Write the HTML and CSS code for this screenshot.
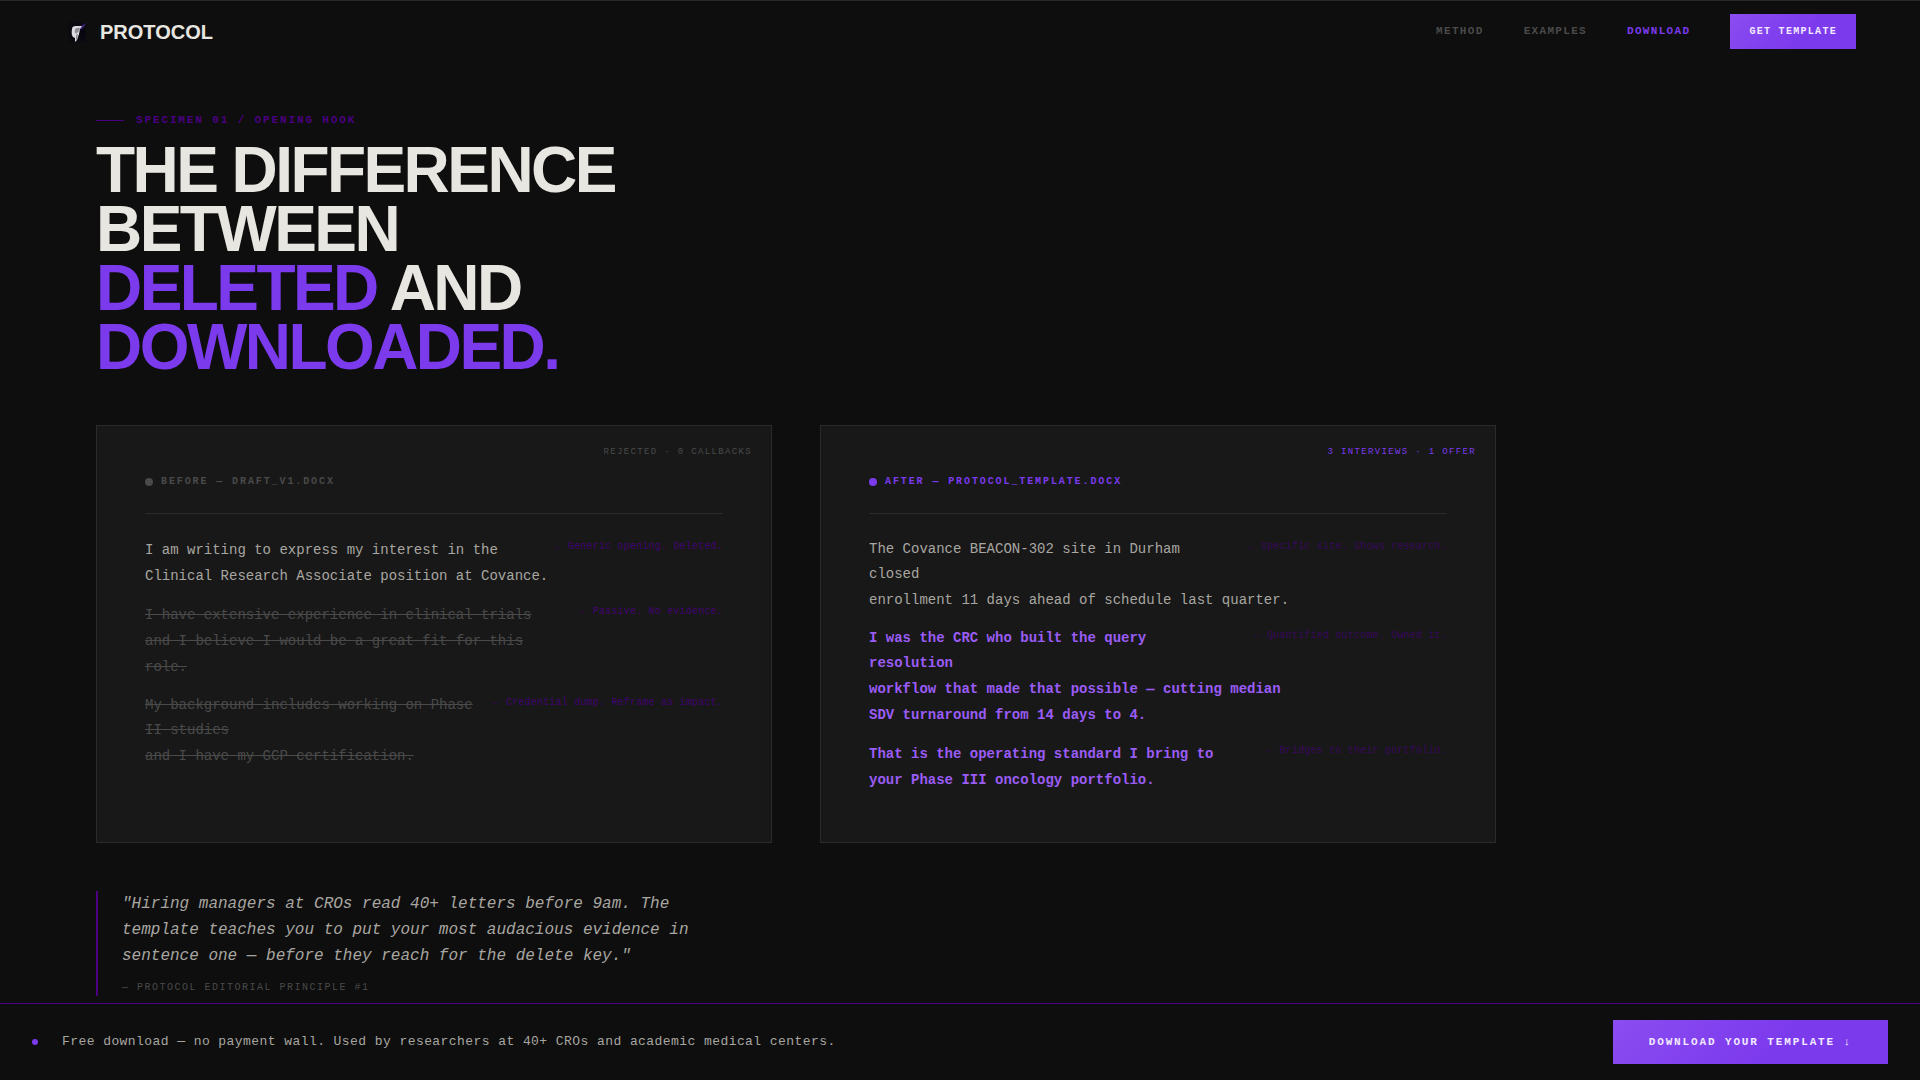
FILE: index.html
```html
<!DOCTYPE html>
<html lang="en">
<head>
<meta charset="utf-8">
<meta name="viewport" content="width=device-width, initial-scale=1">
<title>Protocol</title>
<link rel="stylesheet" href="styles.css">
</head>
<body>
<header class="nav">
  <a class="brand" href="#">
    <svg class="brand-mark" viewBox="0 0 28 28" aria-hidden="true">
      <rect x="4" y="4" width="18" height="20" fill="#0b0a10"/>
      <path d="M16 10 21 8 21 20 17 21Z" fill="#07050d"/>
      <path d="M15 9 22 5 20 9 17 12Z" fill="#3a2472"/>
      <path d="M8 11Q8 8 12 8L18 8 16 11 15 16 13 22 11 24 11 20 9 19Q7 16 8 11Z" fill="#dddce1"/>
      <path d="M11 11Q14 9 16 10L15 13 12 16Q10 14 11 11Z" fill="#8f8d96"/>
      <path d="M12 17 14 16 13 21 12 22Z" fill="#8f8d96"/>
    </svg>
    <span>PROTOCOL</span>
  </a>
  <nav class="nav-links">
    <a href="#method">METHOD</a>
    <a href="#examples">EXAMPLES</a>
    <a class="is-active" href="#download">DOWNLOAD</a>
    <button class="button button--small" type="button">GET TEMPLATE</button>
  </nav>
</header>

<main class="page">
  <p class="eyebrow">SPECIMEN 01 / OPENING HOOK</p>
  <h1 class="headline">THE DIFFERENCE<br>BETWEEN<br><em>DELETED</em> AND<br><em>DOWNLOADED.</em></h1>

  <div class="compare">
    <article class="card">
      <span class="card-status">REJECTED · 0 CALLBACKS</span>
      <h2 class="card-label">BEFORE — DRAFT_V1.DOCX</h2>
      <p class="para"><span class="note">← Generic opening. Deleted.</span><span class="line">I am writing to express my interest in the</span><span class="line">Clinical Research Associate position at Covance.</span></p>
      <p class="para para--struck"><span class="note">← Passive. No evidence.</span><span class="line">I have extensive experience in clinical trials</span><span class="line">and I believe I would be a great fit for this</span><span class="line">role.</span></p>
      <p class="para para--struck"><span class="note">← Credential dump. Reframe as impact.</span><span class="line line--wrap">My background includes working on Phase II studies</span><span class="line">and I have my GCP certification.</span></p>
    </article>
    <article class="card card--after">
      <span class="card-status">3 INTERVIEWS · 1 OFFER</span>
      <h2 class="card-label">AFTER — PROTOCOL_TEMPLATE.DOCX</h2>
      <p class="para"><span class="note">← Specific site. Shows research.</span><span class="line line--wrap">The Covance BEACON-302 site in Durham closed</span><span class="line">enrollment 11 days ahead of schedule last quarter.</span></p>
      <p class="para para--strong"><span class="note">← Quantified outcome. Owned it.</span><span class="line line--wrap">I was the CRC who built the query resolution</span><span class="line">workflow that made that possible — cutting median</span><span class="line">SDV turnaround from 14 days to 4.</span></p>
      <p class="para para--strong"><span class="note">← Bridges to their portfolio.</span><span class="line">That is the operating standard I bring to</span><span class="line">your Phase III oncology portfolio.</span></p>
    </article>
  </div>

  <blockquote class="quote">
    <p>"Hiring managers at CROs read 40+ letters before 9am. The template teaches you to put your most audacious evidence in sentence one — before they reach for the delete key."</p>
    <footer>— PROTOCOL EDITORIAL PRINCIPLE #1</footer>
  </blockquote>
</main>

<aside class="bar">
  <p class="bar-text">Free download — no payment wall. Used by researchers at 40+ CROs and academic medical centers.</p>
  <button class="button" type="button">DOWNLOAD YOUR TEMPLATE ↓</button>
</aside>
</body>
</html>
```
FILE: styles.css
```css
:root {
  --bg: #0e0e0e;
  --card: #181818;
  --rule: #2a2a2a;
  --paper: #e8e6e1;
  --text: #a8a6a1;
  --muted: #4a4a4a;
  --violet: #7c3aed;
  --violet-light: #9b5cf6;
  --indigo: #4b0082;
}

* { box-sizing: border-box; margin: 0; }

body {
  background: var(--bg);
  color: var(--text);
  font-family: "Liberation Mono", monospace;
  padding-bottom: 77px;
}

a { color: inherit; text-decoration: none; }

.nav {
  display: flex;
  align-items: center;
  justify-content: space-between;
  height: 62px;
  padding: 0 64px;
  border-top: 1px solid var(--rule);
}

.brand {
  display: flex;
  align-items: center;
  gap: 8px;
  color: var(--paper);
  font: bold 20px/24px "Liberation Sans", sans-serif;
}

.brand-mark { width: 28px; height: 28px; }

.nav-links {
  display: flex;
  align-items: center;
  gap: 40px;
  color: var(--muted);
  font-size: 11px;
  font-weight: bold;
  letter-spacing: 0.12em;
}

.nav-links a { padding-bottom: 2px; }

.is-active { color: var(--violet); }

.button {
  height: 44px;
  padding: 0 36px;
  border: 0;
  background: linear-gradient(135deg, #8b4cf0, var(--violet) 60%);
  color: #f3eaff;
  font: bold 11px/16px "Liberation Mono", monospace;
  letter-spacing: 0.17em;
  white-space: nowrap;
}

.button--small {
  height: 35px;
  padding: 0 19px;
  font-size: 10px;
  letter-spacing: 0.13em;
}

.page { padding: 50px 96px 0; }

.eyebrow {
  display: flex;
  align-items: center;
  gap: 12px;
  margin-bottom: 13px;
  color: var(--indigo);
  font-size: 11px;
  font-weight: bold;
  line-height: 16px;
  letter-spacing: 0.17em;
}

.eyebrow::before {
  content: "";
  width: 28px;
  height: 1px;
  background: currentColor;
}

.headline {
  margin-bottom: 48px;
  color: var(--paper);
  font: bold 64px/59px "Liberation Sans", sans-serif;
  letter-spacing: -0.04em;
}

.headline em { color: var(--violet); font-style: normal; }

.compare {
  display: grid;
  grid-template-columns: 1fr 1fr;
  gap: 48px;
  max-width: 1400px;
}

.card {
  position: relative;
  padding: 48px;
  border: 1px solid var(--rule);
  background: var(--card);
}

.card-status {
  position: absolute;
  top: 20px;
  right: 19px;
  color: var(--muted);
  font-size: 9px;
  line-height: 12px;
  letter-spacing: 0.15em;
}

.card-label {
  display: flex;
  align-items: center;
  gap: 8px;
  margin-bottom: 23px;
  padding-bottom: 24px;
  border-bottom: 1px solid var(--rule);
  color: var(--muted);
  font-size: 10px;
  line-height: 15px;
  letter-spacing: 0.19em;
}

.card-label::before {
  content: "";
  width: 8px;
  height: 8px;
  border-radius: 50%;
  background: currentColor;
}

.card--after .card-status,
.card--after .card-label { color: var(--violet); }

.para { margin-bottom: 13px; font-size: 14px; line-height: 26px; }
.para:last-child { margin-bottom: 1px; }
.line { display: block; }
.line--wrap { line-height: 25px; }
.para--struck .line { color: var(--muted); text-decoration: line-through; }
.para--strong .line { color: var(--violet-light); font-weight: bold; }

.note {
  float: right;
  margin-left: 20px;
  color: var(--indigo);
  font-size: 10px;
  line-height: 20px;
  letter-spacing: 0.02em;
  opacity: 0.85;
}

.card--after .note { opacity: 0.65; }

.quote {
  max-width: 640px;
  margin-top: 48px;
  padding-left: 24px;
  border-left: 2px solid var(--indigo);
}

.quote p { font-size: 16px; font-style: italic; line-height: 26px; }

.quote footer {
  padding-top: 11px;
  color: var(--muted);
  font-size: 10px;
  line-height: 16px;
  letter-spacing: 0.15em;
}

.bar {
  position: fixed;
  right: 0;
  bottom: 0;
  left: 0;
  display: flex;
  align-items: center;
  justify-content: space-between;
  padding: 16px 32px;
  border-top: 1px solid var(--indigo);
  background: var(--bg);
}

.bar-text {
  display: flex;
  align-items: center;
  gap: 24px;
  font-size: 13px;
  line-height: 20px;
  letter-spacing: 0.033em;
}

.bar-text::before {
  content: "";
  width: 6px;
  height: 6px;
  border-radius: 50%;
  background: var(--violet);
}
```
